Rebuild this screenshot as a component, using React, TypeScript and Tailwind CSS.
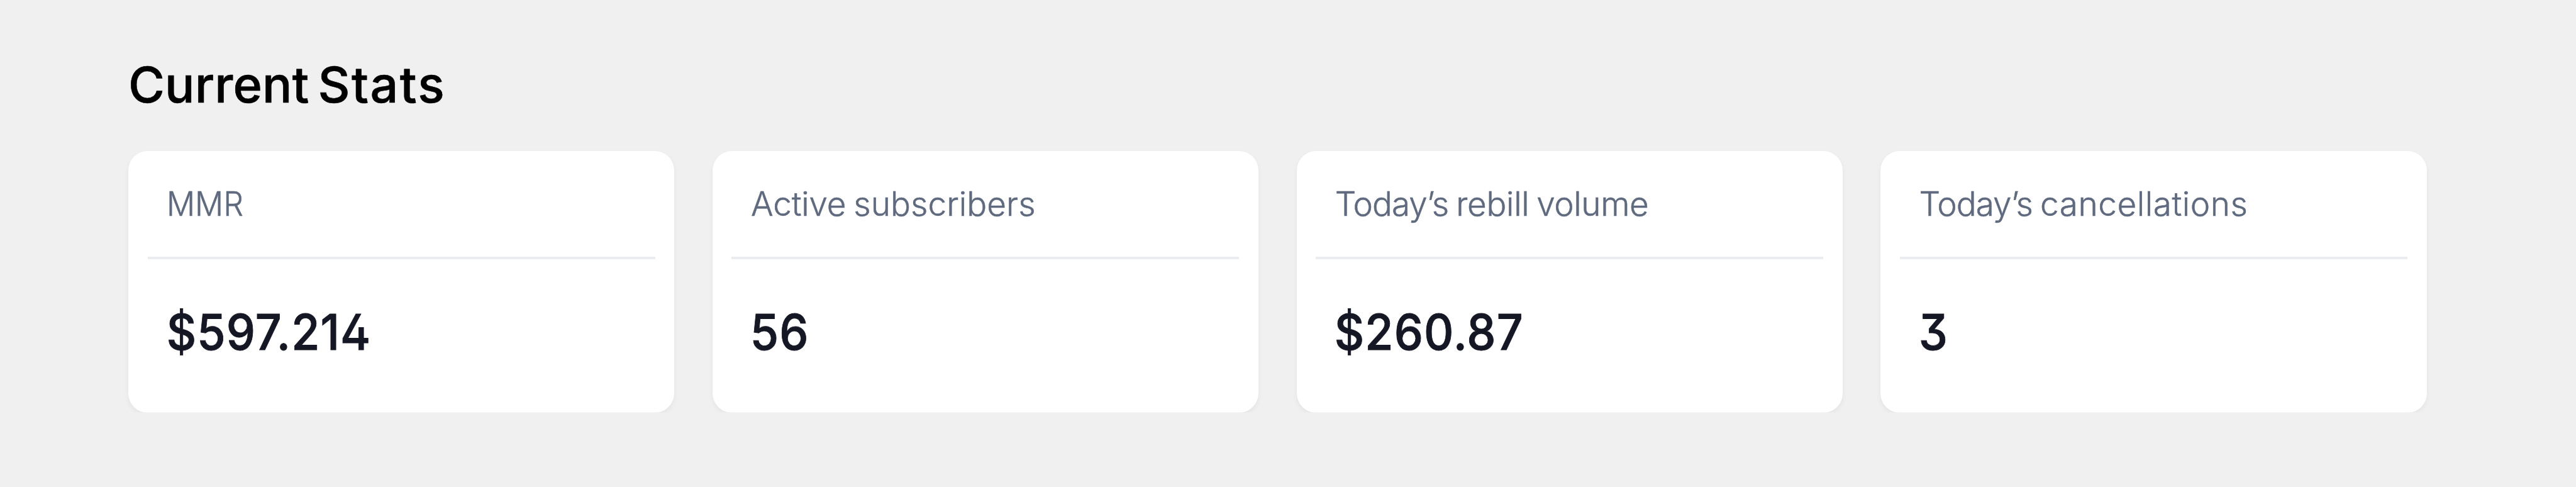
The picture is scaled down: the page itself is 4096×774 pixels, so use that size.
import clsx from "clsx";

const stats = [
	{
		words: [{ text: "MMR", className: "origin-left scale-x-[0.945]" }],
		value: "$597.214",
	},
	{
		words: [
			{ text: "Active", className: "tracking-[-0.2px]" },
			{ text: "subscribers", className: "tracking-[0.1px]" },
		],
		value: "56",
	},
	{
		words: [
			{ text: "Today’s", className: "tracking-[-0.9px]" },
			{ text: "rebill", className: "tracking-[-0.3px]" },
			{ text: "volume", className: "tracking-[-0.4px]" },
		],
		value: "$260.87",
	},
	{
		words: [
			{ text: "Today’s", className: "tracking-[-0.9px]" },
			{ text: "cancellations", className: "tracking-[0.6px]" },
		],
		value: "3",
	},
];

export default function App() {
	return (
		<main className="h-[774px] w-[4096px] bg-[#f0f0f0] pl-[204px] pt-[84px] font-['Inter',sans-serif]">
			<h1 className="flex h-[156px] gap-[14px] text-[79px] leading-[100px] font-medium text-black [-webkit-text-stroke:0.6px]">
				<span className="tracking-[0.1px]">Current</span>
				<span className="tracking-[2.3px]">Stats</span>
			</h1>
			<div className="flex gap-[60.6px] [clip-path:inset(-20px_-20px_0_-20px)]">
				{stats.map(stat => (
					<section
						key={stat.value}
						className="h-[415.6px] w-[868.2px] rounded-[31px] bg-white px-[30.6px] shadow-[0_4px_8px_rgba(0,0,0,0.05)]"
					>
						<div className="h-[172px] border-b-4 border-[#ebecf2] px-[30.6px] pt-[49px]">
							<p className="flex gap-[12px] text-[53px] leading-[70px] font-light text-[#5f6a7f] [-webkit-text-stroke:0.5px]">
								{stat.words.map(word => (
									<span key={word.text} className={clsx("block", word.className)}>
										{word.text}
									</span>
								))}
							</p>
						</div>
						<p className="origin-left scale-x-[0.93] pl-[32px] pt-[65px] text-[79px] leading-[100px] font-medium tracking-[1.2px] text-[#151724] [font-feature-settings:'cv02','cv09'] [-webkit-text-stroke:0.9px]">
							{stat.value}
						</p>
					</section>
				))}
			</div>
		</main>
	);
}
